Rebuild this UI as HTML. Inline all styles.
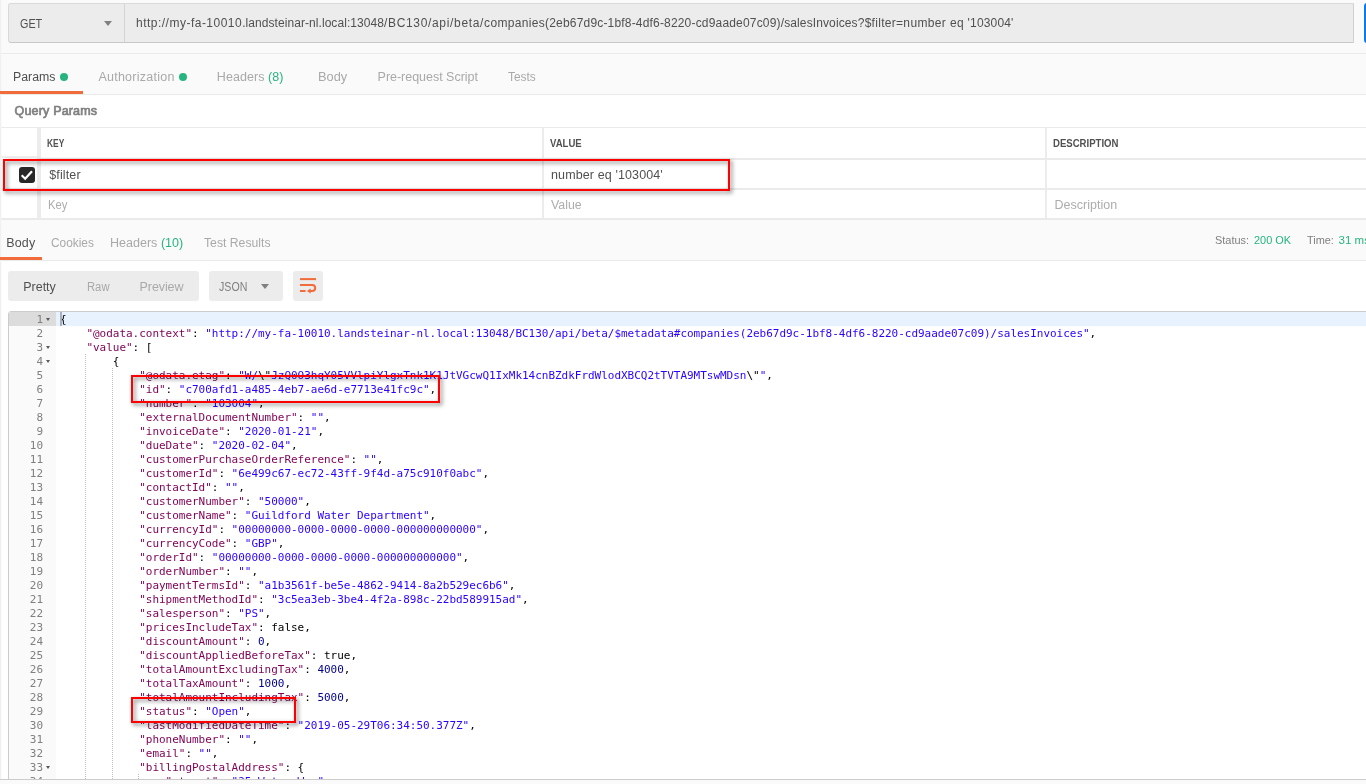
<!DOCTYPE html>
<html>
<head>
<meta charset="utf-8">
<title>Postman</title>
<style>
*{box-sizing:border-box;margin:0;padding:0}
html,body{width:1366px;height:784px;overflow:hidden;background:#fafafa;font-family:"Liberation Sans","DejaVu Sans",sans-serif;font-size:12px;color:#505050}
.abs{position:absolute}
#root{will-change:transform;position:relative;width:1366px;height:784px;overflow:hidden;background:#fafafa}
.hl{position:absolute;left:0;width:1366px;height:1px;background:#eaeaea}
.t{position:absolute;white-space:nowrap;line-height:16px;height:16px}
/* url bar */
#urlbar{left:8px;top:3px;width:1346px;height:40px;background:#ececec;border:1px solid #d9d9d9;border-bottom-color:#c8c8c8;border-right-color:#cfcfcf;border-radius:3px 0 0 3px}
#urlsep{left:124px;top:4px;width:1px;height:38px;background:#d4d4d4}
#send{left:1364px;top:3px;width:20px;height:40px;background:#097bed;border-radius:3px}
.caret{position:absolute;width:0;height:0;border-left:4px solid transparent;border-right:4px solid transparent;border-top:5px solid #808080}
.dot{position:absolute;width:8px;height:8px;border-radius:50%;background:#26b47f}
.green{color:#26b47f}
.orange{position:absolute;height:3px;background:#f26b3a;z-index:3}
.tab{color:#a9a9a9;font-size:13px}
.tab.on{color:#505050}
/* table */
.vsep{position:absolute;top:128px;height:90px;width:2px;background:#ececec}
.th{font-weight:bold;color:#505050}
.ph{color:#adadad;font-size:13px}
.td{color:#505050;font-size:13px}
.redbox{position:absolute;border:2px solid #ff0000;filter:drop-shadow(2.5px 2.5px 2px rgba(0,0,0,.55))}
/* response */
.btn{position:absolute;top:271px;height:30px;background:#ececec;border-radius:3px}
/* editor */
#editor{left:8px;top:311px;width:1370px;height:480px;border:1px solid #ccc;border-radius:3px 0 0 0;background:#fff;overflow:hidden;font-family:"DejaVu Sans Mono","Liberation Mono",monospace;font-size:11px;letter-spacing:-0.0226px;line-height:14px;color:#000}
#gutter{position:absolute;left:0;top:0;width:47px;height:480px;background:#fafafa;color:#808080}
.gl{position:absolute;left:0;width:47px;height:14px}
.gl.act{background:#dcdcdc}
.gl .num{position:absolute;right:13px;top:1px;white-space:nowrap}
.fold{position:absolute;left:37.3px;top:6px;width:0;height:0;border-left:2.8px solid transparent;border-right:2.8px solid transparent;border-top:3.3px solid #5a5a5a}
#code{position:absolute;left:47px;top:0;width:1330px;height:480px}
.cl{position:absolute;left:0;width:1330px;height:14px;white-space:pre}
.cl.act{background:#e8f2fe}
.tx{position:absolute;top:1px;white-space:pre}
.ig{position:absolute;top:0;width:1px;height:14px;background-image:linear-gradient(to bottom,#bfbfbf 1px,transparent 1px);background-size:1px 2px}
.k{color:#7f0055}
.s{color:#2a00ff}
.n{color:#00008b}
#get{left:19.80px;top:16.00px;font-size:12px;transform:scaleX(0.9000);transform-origin:0 0}
#url{left:136.00px;top:15.00px;font-size:12px}
#tb1{left:12.60px;top:69.00px;font-size:12.5px;transform:scaleX(0.9856);transform-origin:0 0}
#tb2{left:98.40px;top:69.00px;font-size:12.5px;letter-spacing:0.250px}
#tb3{left:216.80px;top:69.00px;font-size:12.5px;letter-spacing:0.060px}
#tb4{left:318.40px;top:69.00px;font-size:12.5px;transform:scaleX(1.0267);transform-origin:0 0}
#tb5{left:377.60px;top:69.00px;font-size:12.5px;letter-spacing:-0.024px}
#tb6{left:507.60px;top:69.00px;font-size:12.5px;transform:scaleX(0.9500);transform-origin:0 0}
#qp{left:14.60px;top:103.00px;font-size:12.5px;letter-spacing:0.173px}
#th1{left:47.20px;top:136.00px;font-size:10.2px;transform:scaleX(0.8242);transform-origin:0 0}
#th2{left:549.60px;top:136.00px;font-size:10.2px;transform:scaleX(0.9390);transform-origin:0 0}
#th3{left:1053.00px;top:136.00px;font-size:10.2px;transform:scaleX(0.9406);transform-origin:0 0}
#td1{left:49.20px;top:167.00px;font-size:12.5px;letter-spacing:0.133px}
#td2{left:551.00px;top:167.00px;font-size:12.5px;letter-spacing:0.118px}
#ph1{left:48.20px;top:197.00px;font-size:12.5px;transform:scaleX(0.9000);transform-origin:0 0}
#ph2{left:550.80px;top:197.00px;font-size:12.5px;transform:scaleX(0.9893);transform-origin:0 0}
#ph3{left:1054.60px;top:197.00px;font-size:12.5px}
#rt1{left:6.20px;top:235.00px;font-size:12.5px;letter-spacing:0.167px}
#rt2{left:51.00px;top:235.00px;font-size:12.5px;transform:scaleX(0.9500);transform-origin:0 0}
#rt3{left:109.70px;top:235.00px;font-size:12.5px;transform:scaleX(1.0031);transform-origin:0 0}
#rt4{left:204.40px;top:235.00px;font-size:12.5px;transform:scaleX(0.9765);transform-origin:0 0}
#st1{left:1215.00px;top:232.00px;font-size:11.5px;transform:scaleX(0.9500);transform-origin:0 0}
#st2{left:1253.60px;top:232.00px;font-size:11.5px;transform:scaleX(0.9500);transform-origin:0 0}
#st3{left:1306.60px;top:232.00px;font-size:11.5px;transform:scaleX(0.9500);transform-origin:0 0}
#st4{left:1338.60px;top:232.00px;font-size:11.5px}
#vb1{left:23.20px;top:279.00px;font-size:12.5px}
#vb2{left:86.80px;top:279.00px;font-size:12.5px;transform:scaleX(0.9000);transform-origin:0 0}
#vb3{left:139.60px;top:279.00px;font-size:12.5px;letter-spacing:-0.100px}
#vb4{left:218.60px;top:279.00px;font-size:12.5px;transform:scaleX(0.8490);transform-origin:0 0}
</style>
</head>
<body>
<div id="root">
  <!-- URL bar -->
  <div id="urlbar" class="abs"></div>
  <div id="urlsep" class="abs"></div>
  <div class="t" id="get" style="color:#505050">GET</div>
  <div class="caret" style="left:104px;top:21px"></div>
  <div class="t" id="url" style="color:#505050"><span style="letter-spacing:0.489px">http://my-fa-10010</span><span style="letter-spacing:0.063px">.landsteinar-nl.local:13048</span><span style="letter-spacing:0.668px">/BC130/api/beta/</span><span style="letter-spacing:0.330px">companies</span><span style="letter-spacing:0.178px">(2eb67d9c-1bf8-4df6-8220-cd9aade07c09)</span><span style="letter-spacing:0.116px">/salesInvoices</span><span style="letter-spacing:0.284px">?$filter</span><span style="letter-spacing:0.357px">=number</span><span style="letter-spacing:0.346px"> eq </span><span style="letter-spacing:0.168px">'103004'</span></div>
  <div id="send" class="abs"></div>
  <div class="hl" style="top:53px"></div>

  <!-- request tabs -->
  <div class="t tab on" id="tb1">Params</div>
  <div class="dot" style="left:60px;top:73px"></div>
  <div class="t tab" id="tb2">Authorization</div>
  <div class="dot" style="left:179px;top:73px"></div>
  <div class="t tab" id="tb3">Headers <span class="green">(8)</span></div>
  <div class="t tab" id="tb4">Body</div>
  <div class="t tab" id="tb5">Pre-request Script</div>
  <div class="t tab" id="tb6">Tests</div>
  <div class="orange" style="left:0;top:91px;width:83px"></div>
  <div class="hl" style="top:94px"></div>

  <!-- query params -->
  <div class="abs" style="left:0;top:95px;width:1366px;height:124px;background:#fff"></div>
  <div class="t" id="qp" style="color:#808080;-webkit-text-stroke:0.7px #808080">Query Params</div>
  <div class="hl" style="top:127px"></div>
  <div class="hl" style="top:158px;height:2px;left:41px"></div>
  <div class="hl" style="top:156px;height:2px;width:39px;background:#f0f0f0"></div>
  <div class="hl" style="top:188px;height:2px"></div>
  <div class="hl" style="top:218px;height:2px"></div>
  <div class="vsep" style="left:37px;width:4px"></div>
  <div class="vsep" style="left:542px"></div>
  <div class="vsep" style="left:1045px"></div>
  <div class="t th" id="th1">KEY</div>
  <div class="t th" id="th2">VALUE</div>
  <div class="t th" id="th3">DESCRIPTION</div>
  <div class="abs" id="cb" style="left:19px;top:167px;width:16px;height:16px;background:#282828;border-radius:3px">
    <svg width="16" height="16" viewBox="0 0 16 16" style="display:block"><path d="M2.7 8.3 L6.2 11.7 L13 4.3" fill="none" stroke="#fff" stroke-width="2.3"/></svg>
  </div>
  <div class="t td" id="td1">$filter</div>
  <div class="t td" id="td2">number eq '103004'</div>
  <div class="t ph" id="ph1">Key</div>
  <div class="t ph" id="ph2">Value</div>
  <div class="t ph" id="ph3">Description</div>
  <div class="redbox" style="left:3px;top:159px;width:727px;height:32px"></div>

  <!-- response tabs -->
  <div class="t tab on" id="rt1">Body</div>
  <div class="t tab" id="rt2">Cookies</div>
  <div class="t tab" id="rt3">Headers <span class="green">(10)</span></div>
  <div class="t tab" id="rt4">Test Results</div>
  <div class="t" id="st1" style="color:#808080">Status:</div>
  <div class="t green" id="st2">200 OK</div>
  <div class="t" id="st3" style="color:#808080">Time:</div>
  <div class="t green" id="st4">31 ms</div>
  <div class="orange" style="left:0;top:257px;width:42px"></div>
  <div class="hl" style="top:260px"></div>
  <div class="abs" style="left:0;top:261px;width:1366px;height:518px;background:#fff"></div>

  <!-- view buttons -->
  <div class="btn" style="left:8px;width:191px"></div>
  <div class="t tab on" id="vb1">Pretty</div>
  <div class="t tab" id="vb2">Raw</div>
  <div class="t tab" id="vb3">Preview</div>
  <div class="btn" style="left:209px;width:74px"></div>
  <div class="t" id="vb4" style="color:#808080">JSON</div>
  <div class="caret" style="left:261px;top:284px"></div>
  <div class="btn" style="left:293px;width:30px"></div>
  <svg class="abs" style="left:300px;top:278px" width="17" height="16" viewBox="0 0 17 16"><g fill="none" stroke="#f26b3a" stroke-width="2"><path d="M0 1.1h16"/><path d="M0 7h12.2a3 3 0 0 1 0 6H9.5"/><path d="M0 13h5.6"/></g><path d="M10.7 10.4 L6.8 13 L10.7 15.6z" fill="#f26b3a"/></svg>

  <!-- editor -->
  <div id="editor" class="abs">
    <div id="gutter">
<div class="gl act" style="top:0px"><span class="num">1</span><i class="fold"></i></div>
<div class="gl" style="top:14px"><span class="num">2</span></div>
<div class="gl" style="top:28px"><span class="num">3</span><i class="fold"></i></div>
<div class="gl" style="top:42px"><span class="num">4</span><i class="fold"></i></div>
<div class="gl" style="top:56px"><span class="num">5</span></div>
<div class="gl" style="top:70px"><span class="num">6</span></div>
<div class="gl" style="top:84px"><span class="num">7</span></div>
<div class="gl" style="top:98px"><span class="num">8</span></div>
<div class="gl" style="top:112px"><span class="num">9</span></div>
<div class="gl" style="top:126px"><span class="num">10</span></div>
<div class="gl" style="top:140px"><span class="num">11</span></div>
<div class="gl" style="top:154px"><span class="num">12</span></div>
<div class="gl" style="top:168px"><span class="num">13</span></div>
<div class="gl" style="top:182px"><span class="num">14</span></div>
<div class="gl" style="top:196px"><span class="num">15</span></div>
<div class="gl" style="top:210px"><span class="num">16</span></div>
<div class="gl" style="top:224px"><span class="num">17</span></div>
<div class="gl" style="top:238px"><span class="num">18</span></div>
<div class="gl" style="top:252px"><span class="num">19</span></div>
<div class="gl" style="top:266px"><span class="num">20</span></div>
<div class="gl" style="top:280px"><span class="num">21</span></div>
<div class="gl" style="top:294px"><span class="num">22</span></div>
<div class="gl" style="top:308px"><span class="num">23</span></div>
<div class="gl" style="top:322px"><span class="num">24</span></div>
<div class="gl" style="top:336px"><span class="num">25</span></div>
<div class="gl" style="top:350px"><span class="num">26</span></div>
<div class="gl" style="top:364px"><span class="num">27</span></div>
<div class="gl" style="top:378px"><span class="num">28</span></div>
<div class="gl" style="top:392px"><span class="num">29</span></div>
<div class="gl" style="top:406px"><span class="num">30</span></div>
<div class="gl" style="top:420px"><span class="num">31</span></div>
<div class="gl" style="top:434px"><span class="num">32</span></div>
<div class="gl" style="top:448px"><span class="num">33</span><i class="fold"></i></div>
<div class="gl" style="top:462px"><span class="num">34</span></div>
    </div>
    <div id="code">
<div class="cl act" style="top:0px"><span class="tx" style="left:4.0px">{</span></div>
<div class="cl" style="top:14px"><span class="tx" style="left:30.4px"><span class="k">"@odata.context"</span>: <span class="s">"http://my-fa-10010.landsteinar-nl.local:13048/BC130/api/beta/$metadata#companies(2eb67d9c-1bf8-4df6-8220-cd9aade07c09)/salesInvoices"</span>,</span></div>
<div class="cl" style="top:28px"><span class="tx" style="left:30.4px"><span class="k">"value"</span>: [</span></div>
<div class="cl" style="top:42px"><i class="ig" style="left:29.4px"></i><span class="tx" style="left:56.8px">{</span></div>
<div class="cl" style="top:56px"><i class="ig" style="left:29.4px"></i><i class="ig" style="left:55.8px"></i><span class="tx" style="left:83.2px"><span class="k">"@odata.etag"</span>: <span class="s">"W/</span>\"<span class="s">JzQ0O3hqY05VVlpiYlgxTnk1K1JtVGcwQ1IxMk14cnBZdkFrdWlodXBCQ2tTVTA9MTswMDsn</span>\"<span class="s">"</span>,</span></div>
<div class="cl" style="top:70px"><i class="ig" style="left:29.4px"></i><i class="ig" style="left:55.8px"></i><span class="tx" style="left:83.2px"><span class="k">"id"</span>: <span class="s">"c700afd1-a485-4eb7-ae6d-e7713e41fc9c"</span>,</span></div>
<div class="cl" style="top:84px"><i class="ig" style="left:29.4px"></i><i class="ig" style="left:55.8px"></i><span class="tx" style="left:83.2px"><span class="k">"number"</span>: <span class="s">"103004"</span>,</span></div>
<div class="cl" style="top:98px"><i class="ig" style="left:29.4px"></i><i class="ig" style="left:55.8px"></i><span class="tx" style="left:83.2px"><span class="k">"externalDocumentNumber"</span>: <span class="s">""</span>,</span></div>
<div class="cl" style="top:112px"><i class="ig" style="left:29.4px"></i><i class="ig" style="left:55.8px"></i><span class="tx" style="left:83.2px"><span class="k">"invoiceDate"</span>: <span class="s">"2020-01-21"</span>,</span></div>
<div class="cl" style="top:126px"><i class="ig" style="left:29.4px"></i><i class="ig" style="left:55.8px"></i><span class="tx" style="left:83.2px"><span class="k">"dueDate"</span>: <span class="s">"2020-02-04"</span>,</span></div>
<div class="cl" style="top:140px"><i class="ig" style="left:29.4px"></i><i class="ig" style="left:55.8px"></i><span class="tx" style="left:83.2px"><span class="k">"customerPurchaseOrderReference"</span>: <span class="s">""</span>,</span></div>
<div class="cl" style="top:154px"><i class="ig" style="left:29.4px"></i><i class="ig" style="left:55.8px"></i><span class="tx" style="left:83.2px"><span class="k">"customerId"</span>: <span class="s">"6e499c67-ec72-43ff-9f4d-a75c910f0abc"</span>,</span></div>
<div class="cl" style="top:168px"><i class="ig" style="left:29.4px"></i><i class="ig" style="left:55.8px"></i><span class="tx" style="left:83.2px"><span class="k">"contactId"</span>: <span class="s">""</span>,</span></div>
<div class="cl" style="top:182px"><i class="ig" style="left:29.4px"></i><i class="ig" style="left:55.8px"></i><span class="tx" style="left:83.2px"><span class="k">"customerNumber"</span>: <span class="s">"50000"</span>,</span></div>
<div class="cl" style="top:196px"><i class="ig" style="left:29.4px"></i><i class="ig" style="left:55.8px"></i><span class="tx" style="left:83.2px"><span class="k">"customerName"</span>: <span class="s">"Guildford Water Department"</span>,</span></div>
<div class="cl" style="top:210px"><i class="ig" style="left:29.4px"></i><i class="ig" style="left:55.8px"></i><span class="tx" style="left:83.2px"><span class="k">"currencyId"</span>: <span class="s">"00000000-0000-0000-0000-000000000000"</span>,</span></div>
<div class="cl" style="top:224px"><i class="ig" style="left:29.4px"></i><i class="ig" style="left:55.8px"></i><span class="tx" style="left:83.2px"><span class="k">"currencyCode"</span>: <span class="s">"GBP"</span>,</span></div>
<div class="cl" style="top:238px"><i class="ig" style="left:29.4px"></i><i class="ig" style="left:55.8px"></i><span class="tx" style="left:83.2px"><span class="k">"orderId"</span>: <span class="s">"00000000-0000-0000-0000-000000000000"</span>,</span></div>
<div class="cl" style="top:252px"><i class="ig" style="left:29.4px"></i><i class="ig" style="left:55.8px"></i><span class="tx" style="left:83.2px"><span class="k">"orderNumber"</span>: <span class="s">""</span>,</span></div>
<div class="cl" style="top:266px"><i class="ig" style="left:29.4px"></i><i class="ig" style="left:55.8px"></i><span class="tx" style="left:83.2px"><span class="k">"paymentTermsId"</span>: <span class="s">"a1b3561f-be5e-4862-9414-8a2b529ec6b6"</span>,</span></div>
<div class="cl" style="top:280px"><i class="ig" style="left:29.4px"></i><i class="ig" style="left:55.8px"></i><span class="tx" style="left:83.2px"><span class="k">"shipmentMethodId"</span>: <span class="s">"3c5ea3eb-3be4-4f2a-898c-22bd589915ad"</span>,</span></div>
<div class="cl" style="top:294px"><i class="ig" style="left:29.4px"></i><i class="ig" style="left:55.8px"></i><span class="tx" style="left:83.2px"><span class="k">"salesperson"</span>: <span class="s">"PS"</span>,</span></div>
<div class="cl" style="top:308px"><i class="ig" style="left:29.4px"></i><i class="ig" style="left:55.8px"></i><span class="tx" style="left:83.2px"><span class="k">"pricesIncludeTax"</span>: false,</span></div>
<div class="cl" style="top:322px"><i class="ig" style="left:29.4px"></i><i class="ig" style="left:55.8px"></i><span class="tx" style="left:83.2px"><span class="k">"discountAmount"</span>: <span class="n">0</span>,</span></div>
<div class="cl" style="top:336px"><i class="ig" style="left:29.4px"></i><i class="ig" style="left:55.8px"></i><span class="tx" style="left:83.2px"><span class="k">"discountAppliedBeforeTax"</span>: true,</span></div>
<div class="cl" style="top:350px"><i class="ig" style="left:29.4px"></i><i class="ig" style="left:55.8px"></i><span class="tx" style="left:83.2px"><span class="k">"totalAmountExcludingTax"</span>: <span class="n">4000</span>,</span></div>
<div class="cl" style="top:364px"><i class="ig" style="left:29.4px"></i><i class="ig" style="left:55.8px"></i><span class="tx" style="left:83.2px"><span class="k">"totalTaxAmount"</span>: <span class="n">1000</span>,</span></div>
<div class="cl" style="top:378px"><i class="ig" style="left:29.4px"></i><i class="ig" style="left:55.8px"></i><span class="tx" style="left:83.2px"><span class="k">"totalAmountIncludingTax"</span>: <span class="n">5000</span>,</span></div>
<div class="cl" style="top:392px"><i class="ig" style="left:29.4px"></i><i class="ig" style="left:55.8px"></i><span class="tx" style="left:83.2px"><span class="k">"status"</span>: <span class="s">"Open"</span>,</span></div>
<div class="cl" style="top:406px"><i class="ig" style="left:29.4px"></i><i class="ig" style="left:55.8px"></i><span class="tx" style="left:83.2px"><span class="k">"lastModifiedDateTime"</span>: <span class="s">"2019-05-29T06:34:50.377Z"</span>,</span></div>
<div class="cl" style="top:420px"><i class="ig" style="left:29.4px"></i><i class="ig" style="left:55.8px"></i><span class="tx" style="left:83.2px"><span class="k">"phoneNumber"</span>: <span class="s">""</span>,</span></div>
<div class="cl" style="top:434px"><i class="ig" style="left:29.4px"></i><i class="ig" style="left:55.8px"></i><span class="tx" style="left:83.2px"><span class="k">"email"</span>: <span class="s">""</span>,</span></div>
<div class="cl" style="top:448px"><i class="ig" style="left:29.4px"></i><i class="ig" style="left:55.8px"></i><span class="tx" style="left:83.2px"><span class="k">"billingPostalAddress"</span>: {</span></div>
<div class="cl" style="top:462px"><i class="ig" style="left:29.4px"></i><i class="ig" style="left:55.8px"></i><i class="ig" style="left:82.2px"></i><span class="tx" style="left:109.6px"><span class="k">"street"</span>: <span class="s">"25 Water Way"</span>,</span></div>
      <div class="abs" style="left:4px;top:0;width:2px;height:14px;background:#a9b0bd"></div>
    </div>
  </div>

  <!-- annotation boxes -->
  <div class="redbox" style="left:131px;top:375px;width:309px;height:28px"></div>
  <div class="redbox" style="left:131px;top:697px;width:165px;height:26px"></div>

  <div class="abs" style="left:0;top:0;width:2px;height:784px;background:linear-gradient(to right,#ebebeb,#f6f6f6 50%,rgba(255,255,255,0))"></div>
  <!-- bottom strip -->
  <div class="abs" style="left:0;top:779px;width:1366px;height:5px;background:#fafafa;border-top:1px solid #ccc"></div>
</div>
</body>
</html>
